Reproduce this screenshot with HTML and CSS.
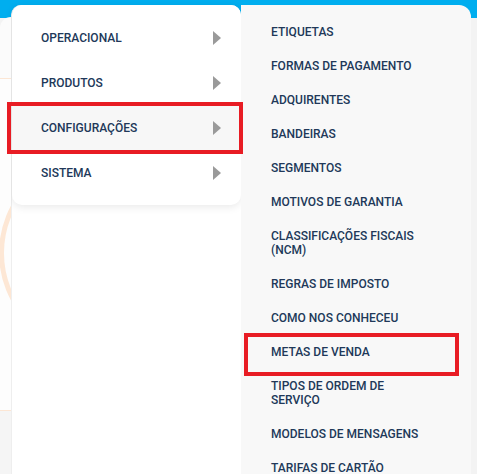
FILE: index.html
```html
<!DOCTYPE html>
<html lang="pt-BR">
<head>
  <meta charset="UTF-8" />
  <title>Menu Configurações</title>
  <link rel="stylesheet" href="styles.css">
</head>
<body>
  <div class="page">
    <div class="strip">
      <div class="strip-top"></div>
      <div class="strip-mid"></div>
      <div class="strip-bottom"></div>
      <div class="ring"></div>
    </div>

    <div class="drawer">
      <ul class="menu">
        <li class="menu-item">OPERACIONAL <span class="arrow"></span></li>
        <li class="menu-item">PRODUTOS <span class="arrow"></span></li>
        <li class="menu-item active">CONFIGURAÇÕES <span class="arrow"></span><span class="mark mark-main"></span></li>
        <li class="menu-item">SISTEMA <span class="arrow"></span></li>
      </ul>
    </div>

    <ul class="submenu">
      <li class="sub-item">ETIQUETAS</li>
      <li class="sub-item">FORMAS DE PAGAMENTO</li>
      <li class="sub-item">ADQUIRENTES</li>
      <li class="sub-item">BANDEIRAS</li>
      <li class="sub-item">SEGMENTOS</li>
      <li class="sub-item">MOTIVOS DE GARANTIA</li>
      <li class="sub-item">CLASSIFICAÇÕES FISCAIS (NCM)</li>
      <li class="sub-item">REGRAS DE IMPOSTO</li>
      <li class="sub-item">COMO NOS CONHECEU</li>
      <li class="sub-item">METAS DE VENDA<span class="mark mark-sub"></span></li>
      <li class="sub-item">TIPOS DE ORDEM DE SERVIÇO</li>
      <li class="sub-item">MODELOS DE MENSAGENS</li>
      <li class="sub-item">TARIFAS DE CARTÃO</li>
    </ul>
  </div>
</body>
</html>
```

FILE: styles.css
```css
html, body {
  margin: 0;
  padding: 0;
}

body {
  width: 477px;
  height: 474px;
  overflow: hidden;
  font-family: Roboto, "Liberation Sans", Arial, sans-serif;
  background: linear-gradient(#00aeef 0, #00aeef 18px, #f3f3f3 18px);
}

ul {
  list-style: none;
  margin: 0;
  padding: 0;
}

.page {
  display: flex;
  height: 474px;
  padding-top: 5px;
  box-sizing: border-box;
}

/* page behind the menus */
.strip {
  position: relative;
  width: 11px;
  margin-top: 12px;
  border-top-left-radius: 12px;
  background: #fbfbfb;
  display: flex;
  flex-direction: column;
  overflow: hidden;
}

.strip-top {
  height: 61px;
  border-bottom: 1px solid #fce6d4;
}

.strip-mid {
  height: 331px;
  background: #fdfdfd;
  border-bottom: 1px solid #fce6d4;
}

.strip-bottom {
  flex: 1;
  background: #f5f5f5;
}

.ring {
  position: absolute;
  left: -1px;
  top: 136px;
  width: 200px;
  height: 200px;
  border: 5px solid #fde7d5;
  border-radius: 50%;
  box-sizing: border-box;
}

/* first level */
.drawer {
  width: 230px;
  background: #fff;
  border-left: 1px solid #eeeeee;
  border-radius: 10px 10px 0 0;
  box-sizing: border-box;
}

.menu {
  background: #fff;
  border-radius: 10px;
  padding: 10px 0;
  box-shadow: 0 2px 8px rgba(0, 0, 0, 0.09);
}

.menu-item {
  position: relative;
  display: flex;
  align-items: center;
  justify-content: space-between;
  height: 45px;
  padding: 0 20px 0 29px;
  font-size: 12px;
  font-weight: 500;
  color: #213859;
}

.menu-item.active {
  background: #f7f7f7;
}

.arrow {
  width: 0;
  height: 0;
  border-left: 8px solid #9a9a9a;
  border-top: 7px solid transparent;
  border-bottom: 7px solid transparent;
}

/* second level */
.submenu {
  width: 230px;
  background: #f8f8f8;
  border-top-right-radius: 12px;
  padding: 10px 40px 0 30px;
  box-sizing: border-box;
}

.sub-item {
  position: relative;
  padding: 10px 0;
  line-height: 14px;
  font-size: 12px;
  font-weight: 500;
  color: #213859;
}

/* red annotation boxes */
.mark {
  position: absolute;
  border: 4px solid #e81c24;
  box-sizing: border-box;
}

.mark-main {
  left: -5px;
  right: -2px;
  top: -3px;
  bottom: -4px;
}

.mark-sub {
  left: -27px;
  right: -28px;
  top: -2px;
  bottom: -7px;
}
```
